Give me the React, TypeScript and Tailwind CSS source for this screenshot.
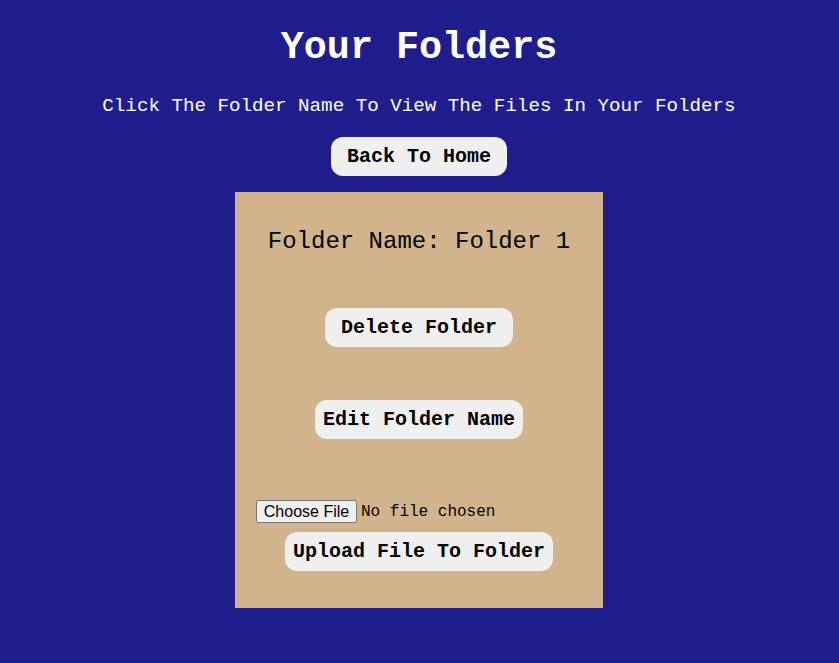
import React from "react";

export default function App() {
  const mono = "font-['Liberation_Mono',monospace]";
  return (
    <div className={`min-h-screen w-full bg-[#1f1e8c] flex flex-col items-center pr-[1px] ${mono}`}>
      <h1 className="mt-[26px] text-[38.4px] leading-[44px] font-bold text-white">Your Folders</h1>
      <p className="mt-[25px] text-[19.2px] leading-[22px] text-white">
        Click The Folder Name To View The Files In Your Folders
      </p>
      <button className="mt-[20px] h-[39px] w-[176px] rounded-[12px] bg-[#efefef] text-[20px] font-bold text-black">
        Back To Home
      </button>
      <div className="mt-[16px] w-[368px] h-[416px] bg-[#d2b48c] flex flex-col items-center">
        <div className="mt-[36px] text-[24px] leading-[28px] text-black">Folder Name: Folder 1</div>
        <button className="mt-[52px] h-[39px] w-[188px] rounded-[12px] bg-[#efefef] text-[20px] font-bold text-black">
          Delete Folder
        </button>
        <button className="mt-[53px] h-[39px] w-[208px] rounded-[12px] bg-[#efefef] text-[20px] font-bold text-black">
          Edit Folder Name
        </button>
        <div className="mt-[61px] self-start ml-[21px] flex items-center gap-[4px] h-[23px]">
          <span className="h-[23px] w-[101px] flex items-center justify-center border border-[#767676] rounded-[2px] bg-[#efefef] font-['Liberation_Sans',Arial,sans-serif] text-[16px] text-black">
            Choose File
          </span>
          <span className="text-[16px] text-black">No file chosen</span>
        </div>
        <button className="mt-[9px] h-[39px] w-[268px] rounded-[12px] bg-[#efefef] text-[20px] font-bold text-black">
          Upload File To Folder
        </button>
      </div>
    </div>
  );
}
